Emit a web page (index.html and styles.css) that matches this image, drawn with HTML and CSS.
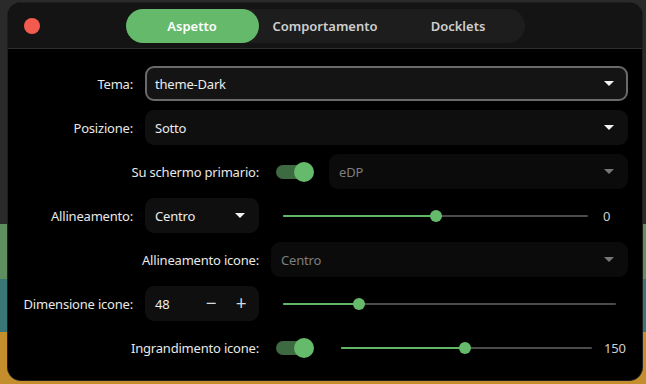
FILE: index.html
```html
<!DOCTYPE html>
<html lang="it">
<head>
<meta charset="utf-8">
<title>Preferenze</title>
<link rel="stylesheet" href="styles.css">
</head>
<body>
<div class="window">
  <header class="header">
    <div class="left"><span class="close"></span></div>
    <nav class="tabs">
      <span class="tab active">Aspetto</span>
      <span class="tab">Comportamento</span>
      <span class="tab">Docklets</span>
    </nav>
    <div class="right"></div>
  </header>
  <main class="content">
    <div class="grid">
      <label class="lbl">Tema:</label>
      <div class="combo focused span2"><span>theme-Dark</span><i class="arrow"></i></div>

      <label class="lbl">Posizione:</label>
      <div class="combo span2"><span>Sotto</span><i class="arrow"></i></div>

      <label class="lbl span2">Su schermo primario:</label>
      <div class="cell">
        <span class="switch"><span class="knob"></span></span>
        <div class="combo disabled grow"><span>eDP</span><i class="arrow"></i></div>
      </div>

      <label class="lbl">Allineamento:</label>
      <div class="combo"><span>Centro</span><i class="arrow"></i></div>
      <div class="cell">
        <div class="slider"><div class="track"><div class="fill" style="width:50%"></div><span class="thumb" style="left:50%"></span></div></div>
        <span class="value wide">0</span>
      </div>

      <label class="lbl span2">Allineamento icone:</label>
      <div class="combo disabled"><span>Centro</span><i class="arrow"></i></div>

      <label class="lbl">Dimensione icone:</label>
      <div class="spin"><span class="num">48</span><span class="btn">−</span><span class="btn">+</span></div>
      <div class="cell">
        <div class="slider"><div class="track"><div class="fill" style="width:22.8%"></div><span class="thumb" style="left:22.8%"></span></div></div>
      </div>

      <label class="lbl span2">Ingrandimento icone:</label>
      <div class="cell">
        <span class="switch"><span class="knob"></span></span>
        <div class="slider"><div class="track"><div class="fill" style="width:49.4%"></div><span class="thumb" style="left:49.4%"></span></div></div>
        <span class="value">150</span>
      </div>
    </div>
  </main>
</div>
</body>
</html>
```

FILE: styles.css
```css
* { box-sizing: border-box; }
html, body { margin: 0; padding: 0; }
body {
  width: 646px;
  height: 384px;
  overflow: hidden;
  font-family: "Noto Sans", "Open Sans", sans-serif;
  font-size: 13px;
  letter-spacing: -0.2px;
  color: #e6e6e6;
  background: linear-gradient(to bottom, #2a2a2a 0, #2a2a2a 224px, #5d8f60 224px, #5d8f60 279px, #3b7677 279px, #3b7677 332px, #c38e2b 332px);
  padding: 3px 4px 4px 8px;
}
.window {
  width: 634px;
  height: 377px;
  background: #000;
  border-radius: 13px;
  overflow: hidden;
  display: flex;
  flex-direction: column;
  box-shadow: 0 0 0 1px #1e1e1e;
}
.header {
  height: 46px;
  background: #141414;
  border-bottom: 1px solid #2f2f2f;
  display: grid;
  grid-template-columns: 1fr auto 1fr;
  align-items: center;
  padding: 0 16px;
  flex: none;
}
.close {
  display: block;
  width: 16px;
  height: 16px;
  border-radius: 50%;
  background: #f35b4f;
}
.tabs {
  display: flex;
  background: #1d1d1d;
  border-radius: 17px;
  height: 34px;
  margin-top: 1px;
}
.tab {
  width: 133px;
  display: flex;
  align-items: center;
  justify-content: center;
  border-radius: 17px;
  font-weight: 600;
  color: #cfcfcf;
  letter-spacing: 0;
}
.tab.active { background: #65b96b; color: #fff; }
.content {
  flex: 1;
  padding: 17px 14px 0 16px;
}
.grid {
  display: grid;
  grid-template-columns: 109px 114px 1fr;
  column-gap: 12px;
  row-gap: 9px;
  grid-auto-rows: 35px;
}
.lbl {
  display: flex;
  align-items: center;
  justify-content: flex-end;
  white-space: nowrap;
  color: #e8e8e8;
}
.span2 { grid-column: span 2; }
.cell { display: flex; align-items: center; }
.combo {
  display: flex;
  align-items: center;
  justify-content: space-between;
  background: #0f0f0f;
  border-radius: 9px;
  padding: 0 14px 0 10px;
  color: #ececec;
  height: 35px;
}
.combo.focused { background: #141414; border: 2px solid #6a6a6a; padding: 0 12px 0 8px; }
.combo.disabled { background: #0b0b0b; color: #7e7e7e; }
.combo.grow { flex: 1; }
.arrow {
  width: 0; height: 0;
  border-left: 5px solid transparent;
  border-right: 5px solid transparent;
  border-top: 5px solid #f2f2f2;
}
.combo.disabled .arrow { border-top-color: #777; }
.switch {
  flex: none;
  position: relative;
  width: 37px;
  height: 14px;
  border-radius: 7px;
  background: #3d6a40;
  margin: 0 16px 0 5px;
}
.knob {
  position: absolute;
  right: -1px;
  top: -3px;
  width: 20px;
  height: 20px;
  border-radius: 50%;
  background: #66ba6b;
}
.slider { flex: 1; padding: 0 12px; }
.track {
  position: relative;
  height: 2px;
  background: #4b4b4b;
  border-radius: 1px;
}
.fill { height: 2px; background: #62b767; border-radius: 1px; }
.thumb {
  position: absolute;
  top: -5px;
  width: 12px;
  height: 12px;
  margin-left: -6px;
  border-radius: 50%;
  background: #66ba6b;
}
.value { width: 24px; color: #d0d0d0; }
.value.wide { width: 28px; padding-left: 3px; }
.spin {
  display: flex;
  align-items: center;
  background: #0f0f0f;
  border-radius: 9px;
  padding: 0 3px 0 10px;
}
.num { flex: 1; color: #ececec; }
.btn {
  width: 30px;
  text-align: center;
  font-size: 19px;
  line-height: 1;
  color: #d8d8d8;
}
```
